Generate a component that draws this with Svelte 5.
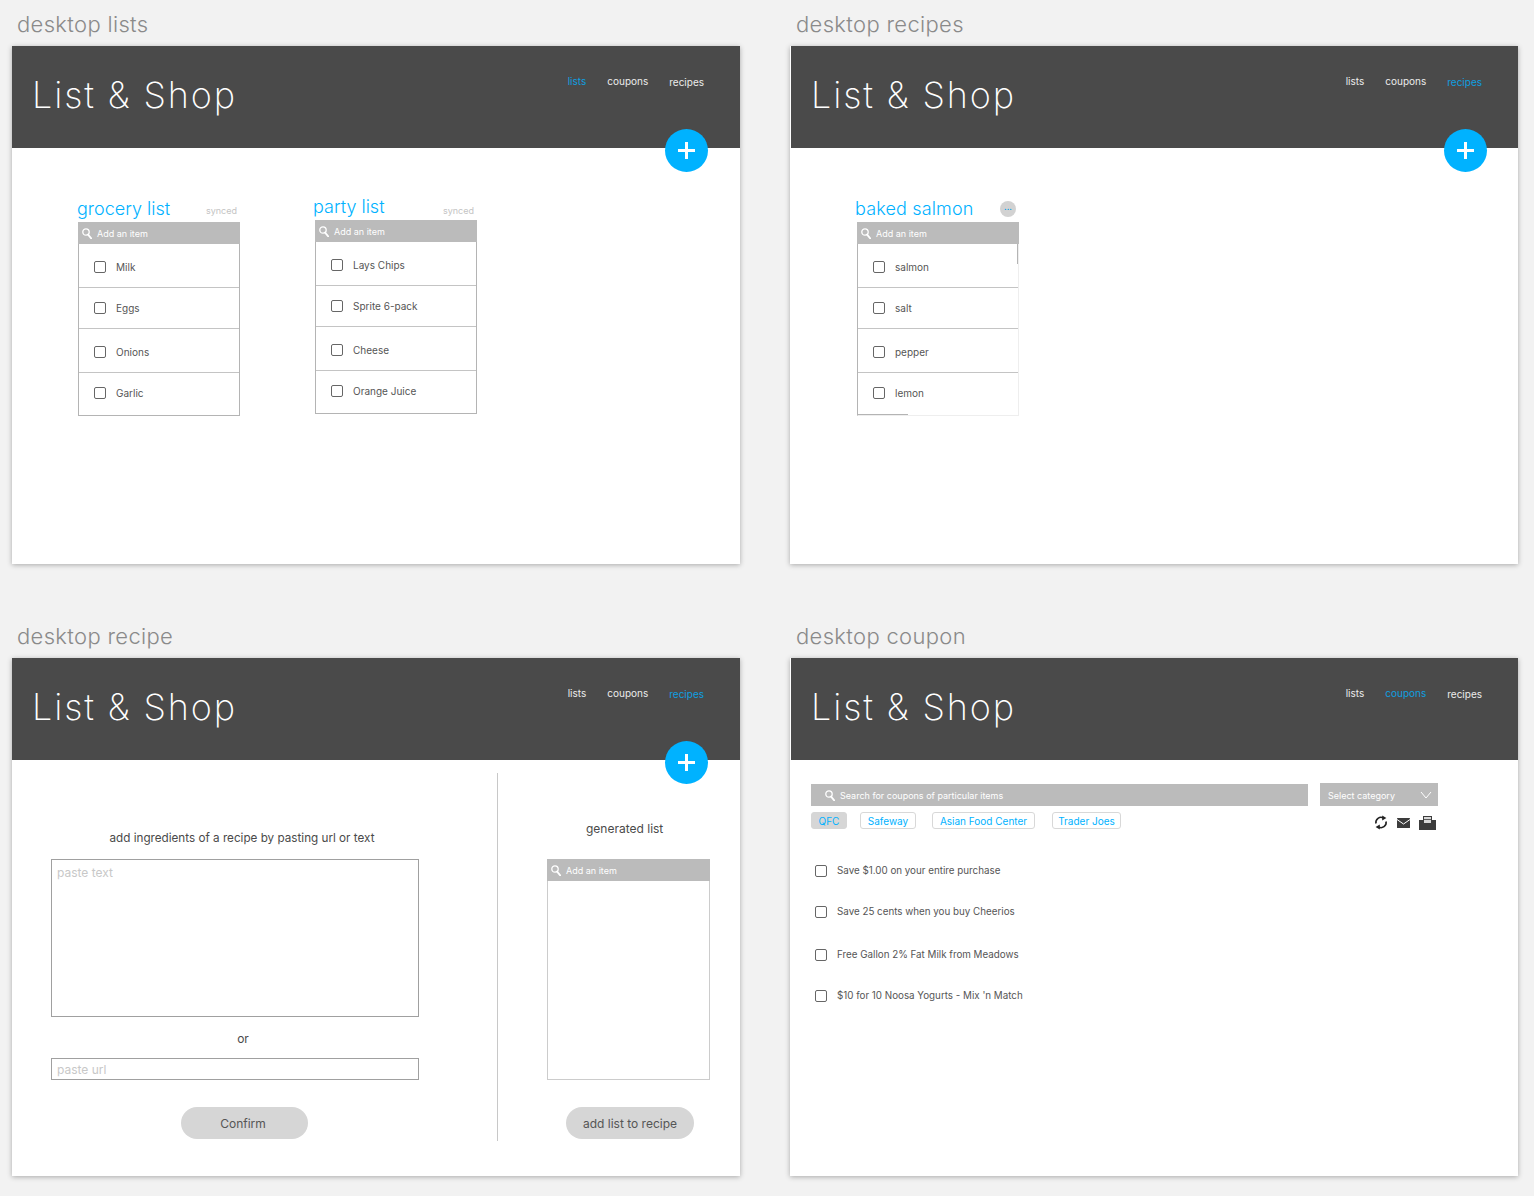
<script lang="ts">
	type NavKey = 'lists' | 'coupons' | 'recipes';
	const navItems: NavKey[] = ['lists', 'coupons', 'recipes'];

	const groceryItems = ['Milk', 'Eggs', 'Onions', 'Garlic'];
	const partyItems = ['Lays Chips', 'Sprite 6-pack', 'Cheese', 'Orange Juice'];
	const salmonItems = ['salmon', 'salt', 'pepper', 'lemon'];
	const stores = ['QFC', 'Safeway', 'Asian Food Center', 'Trader Joes'];
	const coupons = [
		'Save $1.00 on your entire purchase',
		'Save 25 cents when you buy Cheerios',
		'Free Gallon 2% Fat Milk from Meadows',
		"$10 for 10 Noosa Yogurts - Mix 'n Match"
	];
</script>

{#snippet searchIcon()}
	<svg class="search-icon" viewBox="0 0 10 11" aria-hidden="true">
		<circle cx="4" cy="4" r="3.2" fill="none" stroke="currentColor" stroke-width="1.3" />
		<path d="M6.1 6.6 L9.2 10.4" stroke="currentColor" stroke-width="1.7" stroke-linecap="round" />
	</svg>
{/snippet}

{#snippet topBar(active: NavKey, showAdd: boolean)}
	<header class="top-bar">
		<div class="logo">List &amp; Shop</div>
		<nav class="nav">
			{#each navItems as item (item)}
				<span class="nav-item nav-{item}" class:active={item === active}>{item}</span>
			{/each}
		</nav>
		{#if showAdd}
			<div class="add-btn" aria-hidden="true"><span class="plus"></span></div>
		{/if}
	</header>
{/snippet}

{#snippet listBox(items: string[], extraClass: string)}
	<div class="list-box {extraClass}">
		<div class="search-row">{@render searchIcon()}<span>Add an item</span></div>
		{#each items as item (item)}
			<div class="list-row"><span class="check"></span><span>{item}</span></div>
		{/each}
	</div>
{/snippet}

<main class="board">
	<section class="artboard">
		<h2 class="board-label">desktop lists</h2>
		<div class="card">
			{@render topBar('lists', true)}
			<div class="lists-body">
				<div class="list-block grocery">
					<div class="list-head">
						<h3 class="list-title">grocery list</h3>
						<span class="synced">synced</span>
					</div>
					{@render listBox(groceryItems, '')}
				</div>
				<div class="list-block party">
					<div class="list-head">
						<h3 class="list-title">party list</h3>
						<span class="synced">synced</span>
					</div>
					{@render listBox(partyItems, '')}
				</div>
			</div>
		</div>
	</section>

	<section class="artboard">
		<h2 class="board-label">desktop recipes</h2>
		<div class="card">
			{@render topBar('recipes', true)}
			<div class="recipes-body">
				<div class="list-block">
					<div class="list-head">
						<h3 class="list-title salmon-title">baked salmon</h3>
						<span class="more"><span>...</span></span>
					</div>
					{@render listBox(salmonItems, 'faded')}
				</div>
			</div>
		</div>
	</section>

	<section class="artboard">
		<h2 class="board-label">desktop recipe</h2>
		<div class="card">
			{@render topBar('recipes', true)}
			<div class="recipe-body">
				<div class="paste-col">
					<p class="prompt">add ingredients of a recipe by pasting url or text</p>
					<div class="paste-area">paste text</div>
					<p class="or">or</p>
					<div class="paste-url">paste url</div>
					<div class="pill confirm">Confirm</div>
				</div>
				<div class="generated-col">
					<p class="generated-title">generated list</p>
					<div class="list-box generated-box">
						<div class="search-row">{@render searchIcon()}<span>Add an item</span></div>
					</div>
					<div class="pill add-list">add list to recipe</div>
				</div>
			</div>
		</div>
	</section>

	<section class="artboard">
		<h2 class="board-label">desktop coupon</h2>
		<div class="card">
			{@render topBar('coupons', false)}
			<div class="coupon-body">
				<div class="coupon-filters">
					<div class="coupon-search">{@render searchIcon()}<span>Search for coupons of particular items</span></div>
					<div class="category">
						<span>Select category</span>
						<svg width="12" height="8" viewBox="0 0 12 8" aria-hidden="true">
							<path d="M1 1 L6 7 L11 1" fill="none" stroke="#fff" stroke-width="1" />
						</svg>
					</div>
				</div>
				<div class="store-row">
					{#each stores as store, i (store)}
						<span class="chip chip-{i}" class:selected={i === 0}>{store}</span>
					{/each}
					<div class="tools">
						<svg width="14" height="15" viewBox="0 0 14 15" aria-hidden="true">
							<path d="M2 8.5 A5 5 0 0 1 9.6 3.2" fill="none" stroke="#222" stroke-width="1.6" />
							<path d="M8.2 0.4 L12.4 3 L8.2 5.6 Z" fill="#222" />
							<path d="M12 6.5 A5 5 0 0 1 4.4 11.8" fill="none" stroke="#222" stroke-width="1.6" />
							<path d="M5.8 14.6 L1.6 12 L5.8 9.4 Z" fill="#222" />
						</svg>
						<svg width="13" height="10" viewBox="0 0 13 10" aria-hidden="true">
							<rect width="13" height="10" rx="0.5" fill="#3c3c3c" />
							<path d="M0 1.5 L6.5 6 L13 1.5" fill="none" stroke="#fff" stroke-width="1" />
						</svg>
						<svg width="17" height="14" viewBox="0 0 17 14" aria-hidden="true">
							<path d="M0 4 H4 V0 H13 V4 H17 V14 H0 Z" fill="#3c3c3c" />
							<rect x="5" y="1" width="7" height="6" fill="#d8d8d8" />
							<path d="M5 3.5 H12" stroke="#3c3c3c" stroke-width="0.8" />
						</svg>
					</div>
				</div>
				<div class="coupon-list">
					{#each coupons as coupon (coupon)}
						<div class="coupon-row"><span class="check"></span><span>{coupon}</span></div>
					{/each}
				</div>
			</div>
		</div>
	</section>
</main>

<style>
	:global(body) {
		margin: 0;
		background: #f2f2f2;
	}

	.board {
		display: grid;
		grid-template-columns: 728px 728px;
		align-content: start;
		column-gap: 50px;
		row-gap: 48px;
		padding-left: 12px;
		width: 1522px;
		height: 1196px;
		box-sizing: border-box;
		font-family: Inter, 'Noto Sans', sans-serif;
		color: #4a4a4a;
	}

	.artboard {
		display: flex;
		flex-direction: column;
	}

	.board-label {
		height: 46px;
		margin: 0;
		padding: 10px 0 0 5px;
		box-sizing: border-box;
		font-size: 22px;
		line-height: 28px;
		font-weight: 300;
		letter-spacing: 0.33px;
		color: #8a8a8a;
	}

	.artboard:nth-child(even) .board-label {
		padding-left: 6px;
	}

	.card {
		display: flex;
		flex-direction: column;
		height: 518px;
		background: #fff;
		box-shadow: 0 1px 5px rgba(0, 0, 0, 0.3);
	}

	.top-bar {
		position: relative;
		display: flex;
		justify-content: space-between;
		flex: 0 0 102px;
		background: #4a4a4a;
	}

	.artboard:nth-child(even) .top-bar {
		margin-left: 1px;
	}

	.logo {
		padding: 27px 0 0 20px;
		font-size: 36px;
		line-height: 44px;
		font-weight: 150;
		letter-spacing: 1.9px;
		color: #fff;
	}

	.nav {
		display: flex;
		gap: 21px;
		padding: 28px 36px 0 0;
		font-size: 10px;
		line-height: 14px;
		color: #ececec;
	}

	.nav-item.active {
		color: #0f9fe0;
	}

	.nav-recipes {
		margin-top: 1px;
	}

	.add-btn {
		position: absolute;
		left: 653px;
		top: 83px;
		display: flex;
		align-items: center;
		justify-content: center;
		width: 43px;
		height: 43px;
		border-radius: 50%;
		background: #00b2ff;
	}

	.plus {
		position: relative;
		display: block;
		width: 17px;
		height: 3px;
		background: #fff;
	}

	.plus::after {
		content: '';
		position: absolute;
		left: 7px;
		top: -7px;
		width: 3px;
		height: 17px;
		background: #fff;
	}

	.lists-body {
		display: flex;
		align-items: flex-start;
		gap: 73px;
		padding: 49px 0 0 65px;
	}

	.recipes-body {
		padding: 49px 0 0 66px;
	}

	.list-block {
		width: 163px;
	}

	.party {
		width: 164px;
		margin-top: -2px;
	}

	.list-head {
		display: flex;
		align-items: flex-end;
		justify-content: space-between;
		height: 25px;
		padding-right: 3px;
	}

	.list-title {
		margin: 0 0 1px;
		font-size: 18px;
		line-height: 24px;
		font-weight: 300;
		color: #00b2ff;
		white-space: nowrap;
	}

	.salmon-title {
		margin-left: -1px;
		letter-spacing: 0.15px;
	}

	.synced {
		padding-bottom: 5px;
		font-size: 9px;
		line-height: 12px;
		color: #c4c4c4;
	}

	.party .synced {
		padding-bottom: 3px;
	}

	.more {
		display: flex;
		align-items: center;
		justify-content: center;
		width: 16px;
		height: 16px;
		margin: 0 0 5px;
		border-radius: 50%;
		background: #d2d2d2;
		font-size: 9px;
		line-height: 10px;
		color: #00a0e8;
	}

	.more span {
		margin-top: -4px;
	}

	.list-box {
		margin-left: 1px;
		width: 162px;
		box-sizing: border-box;
		border: 1px solid #b4b4b4;
		border-top: 0;
	}

	.party .list-box {
		margin-left: 2px;
	}

	.search-row {
		display: flex;
		align-items: center;
		gap: 5px;
		height: 22px;
		margin: 0 -1px;
		padding-left: 4px;
		background: #bbb;
		font-size: 9px;
		color: #fff;
	}

	.search-icon {
		display: block;
		width: 10px;
		height: 11px;
		color: #fff;
	}

	.list-row {
		display: flex;
		align-items: center;
		gap: 10px;
		height: 44px;
		box-sizing: border-box;
		padding: 2px 0 0 15px;
		border-bottom: 1px solid #c4c4c4;
		font-size: 10px;
		color: #555;
	}

	.list-row:nth-child(3) {
		height: 41px;
		padding-top: 0;
	}

	.list-row:last-child {
		height: 42px;
		padding: 0 0 2px 15px;
		border-bottom: 0;
	}

	/* the reference's box loses most of its right and bottom edge */
	.faded {
		border-color: #eee;
		border-left-color: #b4b4b4;
		background:
			linear-gradient(#b4b4b4, #b4b4b4) left bottom / 50px 1px no-repeat,
			linear-gradient(#b4b4b4, #b4b4b4) right 22px / 1px 20px no-repeat;
	}

	.check {
		display: block;
		flex: 0 0 auto;
		width: 10px;
		height: 10px;
		border: 1.5px solid #666;
		border-radius: 2px;
	}

	.recipe-body {
		display: flex;
		flex: 1;
		align-items: flex-start;
		padding-top: 13px;
	}

	.paste-col {
		display: flex;
		flex-direction: column;
		align-items: center;
		width: 368px;
		height: 368px;
		padding: 0 78px 0 39px;
		border-right: 1px solid #c8c8c8;
	}

	.prompt {
		margin: 57px 0 0 14px;
		font-size: 11.7px;
		line-height: 16px;
		white-space: nowrap;
	}

	.paste-area,
	.paste-url {
		width: 368px;
		box-sizing: border-box;
		border: 1px solid #a0a0a0;
		padding-left: 5px;
		font-size: 12px;
		color: #c8c8c8;
	}

	.paste-area {
		height: 158px;
		margin-top: 13px;
		padding-top: 5px;
		line-height: 16px;
	}

	.or {
		margin: 14px 0 0 16px;
		font-size: 12px;
		line-height: 16px;
	}

	.paste-url {
		height: 22px;
		margin-top: 11px;
		line-height: 22px;
	}

	.pill {
		display: flex;
		align-items: center;
		justify-content: center;
		height: 32px;
		width: 127px;
		border-radius: 16px;
		background: #d6d6d6;
		font-size: 12px;
		color: #555;
	}

	.confirm {
		margin-top: 27px;
		margin-left: 19px;
		padding-right: 3px;
		box-sizing: border-box;
	}

	.generated-col {
		display: flex;
		flex-direction: column;
		width: 163px;
		margin-left: 49px;
	}

	.generated-title {
		margin: 48px 0 0 39px;
		font-size: 12px;
		line-height: 16px;
		white-space: nowrap;
	}

	.generated-box {
		height: 221px;
		margin: 22px 0 0;
		width: 163px;
		border-color: #ccc;
	}

	.add-list {
		width: 128px;
		margin: 27px 0 0 19px;
	}

	.coupon-body {
		padding: 23px 0 0 21px;
	}

	.coupon-filters {
		display: flex;
		align-items: flex-start;
		gap: 12px;
	}

	.coupon-search {
		display: flex;
		align-items: center;
		gap: 5px;
		width: 497px;
		height: 22px;
		margin-top: 1px;
		padding-left: 14px;
		box-sizing: border-box;
		background: #bbb;
		font-size: 9px;
		color: #fff;
	}

	.category {
		display: flex;
		align-items: center;
		justify-content: space-between;
		width: 118px;
		height: 23px;
		padding: 1px 6px 0 8px;
		box-sizing: border-box;
		background: #bbb;
		font-size: 9px;
		color: #fff;
	}

	.store-row {
		display: flex;
		align-items: flex-start;
		width: 625px;
		margin-top: 6px;
		font-size: 10px;
		color: #00b2ff;
	}

	.chip {
		display: flex;
		align-items: center;
		justify-content: center;
		height: 17px;
		box-sizing: border-box;
		border: 1px solid #d8d8d8;
		border-radius: 3px;
	}

	.chip.selected {
		background: #d6d6d6;
		border-color: #d6d6d6;
	}

	.chip-0 {
		width: 36px;
		margin-right: 13px;
	}

	.chip-1 {
		width: 56px;
		margin-right: 16px;
	}

	.chip-2 {
		width: 103px;
		margin-right: 17px;
	}

	.chip-3 {
		width: 69px;
	}

	.tools {
		display: flex;
		align-items: center;
		gap: 9px;
		margin: 3px 0 0 auto;
	}

	.coupon-list {
		display: flex;
		flex-direction: column;
		margin-top: 20px;
		padding-left: 4px;
	}

	.coupon-row {
		display: flex;
		align-items: center;
		gap: 10px;
		height: 41px;
		font-size: 9.8px;
		color: #555;
	}

	.coupon-row:nth-child(3) {
		margin-top: 2px;
	}
</style>
